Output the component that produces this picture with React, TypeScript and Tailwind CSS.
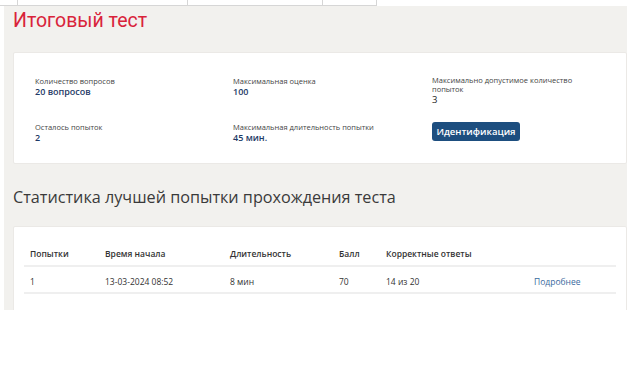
const rows = [
  { n: '1', start: '13-03-2024 08:52', dur: '8 мин', score: '70', correct: '14 из 20' },
]

function Info({ label, value }: { label: string; value: string }) {
  return (
    <div>
      <div className="text-[7.5px] leading-[10px] text-[#444]">{label}</div>
      <div className="text-[9px] leading-[11px] font-semibold text-[#1e3a66]">{value}</div>
    </div>
  )
}

export default function App() {
  return (
    <div className="w-[634px] h-[367px] bg-white overflow-hidden" style={{ fontFamily: '"Open Sans", sans-serif' }}>
      {/* tab strip remnants */}
      <div className="flex w-[377px] h-[6px] border-b border-[#d6d6d6]">
        <div className="w-[18px] border-r border-[#d6d6d6]" />
        <div className="w-[170px] border-r border-[#d6d6d6]" />
        <div className="w-[135px] border-r border-[#d6d6d6]" />
        <div className="w-[54px] border-r border-[#d6d6d6]" />
      </div>

      <div className="ml-[4px] w-[623px] h-[304px] overflow-hidden bg-[#f2f1ee] pl-[9px] pt-[3px]">
        <h1 className="text-[19.5px] leading-[24px] text-[#d9233a]" style={{ fontFamily: 'Roboto, sans-serif' }}>
          Итоговый тест
        </h1>

        <section className="mt-[19px] h-[112px] bg-white border border-[#ebe9e6] rounded-[2px] pl-[21px] pt-[23px]">
          <div className="grid grid-cols-[198px_199px_170px] h-[41px]">
            <Info label="Количество вопросов" value="20 вопросов" />
            <Info label="Максимальная оценка" value="100" />
            <div>
              <div className="text-[7.5px] leading-[9px] text-[#444]">Максимально допустимое количество попыток</div>
              <div className="text-[9.5px] leading-[11px] text-[#222]">3</div>
            </div>
          </div>
          <div className="grid grid-cols-[198px_199px_170px]">
            <div className="pt-[5px]"><Info label="Осталось попыток" value="2" /></div>
            <div className="pt-[5px]"><Info label="Максимальная длительность попытки" value="45 мин." /></div>
            <div>
              <button className="w-[88px] h-[19px] rounded-[3px] bg-[#1d4e7f] text-white text-[9.5px] font-semibold leading-[19px]">
                Идентификация
              </button>
            </div>
          </div>
        </section>

        <h2 className="mt-[22px] text-[16.2px] leading-[22px] text-[#3a3a3a]">
          Статистика лучшей попытки прохождения теста
        </h2>

        <section className="mt-[18px] h-[120px] bg-white border border-[#ebe9e6] rounded-[2px] px-[10px] pt-[21px]">
          <div className="flex h-[19px] border-b-2 border-[#efefef] text-[8.5px] leading-[12px] font-semibold text-[#333]">
            <div className="w-[81px] pl-[6px]">Попытки</div>
            <div className="w-[125px]">Время начала</div>
            <div className="w-[109px]">Длительность</div>
            <div className="w-[47px]">Балл</div>
            <div className="flex-1">Корректные ответы</div>
          </div>
          {rows.map((r) => (
            <div key={r.n} className="flex h-[27px] pt-[9px] border-b-2 border-[#efefef] text-[8.5px] leading-[12px] text-[#333]">
              <div className="w-[81px] pl-[6px]">{r.n}</div>
              <div className="w-[125px]">{r.start}</div>
              <div className="w-[109px]">{r.dur}</div>
              <div className="w-[47px]">{r.score}</div>
              <div className="w-[148px]">{r.correct}</div>
              <div className="flex-1 text-[#3a6a9e]">Подробнее</div>
            </div>
          ))}
        </section>
      </div>
    </div>
  )
}
